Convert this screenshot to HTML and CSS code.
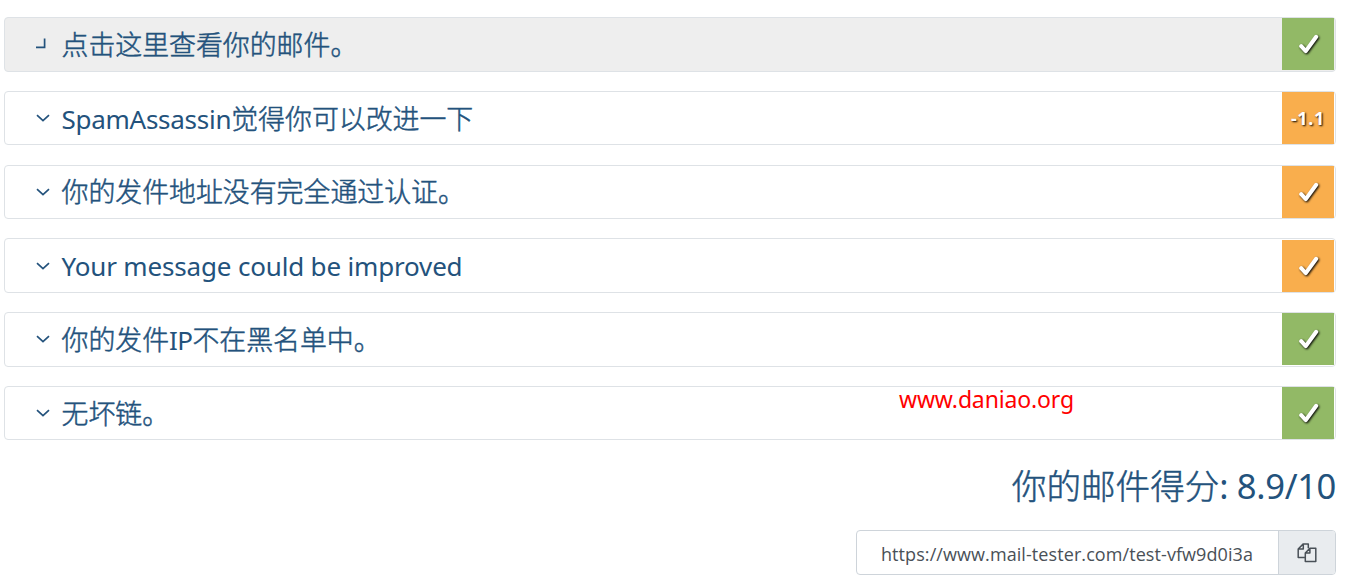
FILE: index.html
```
<!DOCTYPE html>
<html lang="zh">
<head>
<meta charset="utf-8">
<title>Mail Tester</title>
<link rel="stylesheet" href="styles.css">
</head>
<body>
<svg class="defs" width="0" height="0">
  <symbol id="check" viewBox="0 0 20 20"><path d="M2.2 12.2 L6.8 17.1 L17.2 2.8" fill="none" stroke="currentColor" stroke-width="4" stroke-linecap="round" stroke-linejoin="round"/></symbol>
  <symbol id="chevron" viewBox="0 0 14 8"><path d="M1 1.2 L7 6.6 L13 1.2" fill="none" stroke="currentColor" stroke-width="1.7"/></symbol>
</svg>
<main class="results">
  <section class="row open">
    <svg class="arrow turned" viewBox="0 0 14 14"><path d="M2 11.3 H10.6 V2.6" fill="none" stroke="currentColor" stroke-width="1.7"/></svg>
    <h2 class="title">点击这里查看你的邮件。</h2>
    <span class="status good"><svg class="check"><use href="#check"/></svg></span>
  </section>
  <section class="row">
    <svg class="arrow"><use href="#chevron"/></svg>
    <h2 class="title"><span class="brand">SpamAssassin</span>觉得你可以改进一下</h2>
    <span class="status warn">-1.1</span>
  </section>
  <section class="row">
    <svg class="arrow"><use href="#chevron"/></svg>
    <h2 class="title">你的发件地址没有完全通过认证。</h2>
    <span class="status warn"><svg class="check"><use href="#check"/></svg></span>
  </section>
  <section class="row">
    <svg class="arrow"><use href="#chevron"/></svg>
    <h2 class="title"><span class="english">Your message could be improved</span></h2>
    <span class="status warn"><svg class="check"><use href="#check"/></svg></span>
  </section>
  <section class="row">
    <svg class="arrow"><use href="#chevron"/></svg>
    <h2 class="title">你的发件<span class="ip">IP</span>不在黑名单中。</h2>
    <span class="status good"><svg class="check"><use href="#check"/></svg></span>
  </section>
  <section class="row">
    <svg class="arrow"><use href="#chevron"/></svg>
    <h2 class="title">无坏链。</h2>
    <span class="status good"><svg class="check"><use href="#check"/></svg></span>
    <span class="watermark">www.daniao.org</span>
  </section>
</main>
<footer class="summary">
  <h1 class="score">你的邮件得分<span class="value">: 8.9/10</span></h1>
  <div class="share">
    <div class="link"><span class="url">https://www.mail-tester.com/test-vfw9d0i3a</span></div>
    <button class="copy" aria-label="Copy"><svg class="copy-icon" viewBox="0 0 20 20" fill="none" stroke="currentColor" stroke-width="1.5" stroke-linejoin="round"><path d="M7.5 14.6 H1.2 V6 L6.3 .9 H11.3 V5.2 M6.3 .9 V6 H1.2 M8.3 10 L12.9 5.2 H18.8 V18.6 H8.3 Z M12.9 5.2 V10 H8.3"/></svg></button>
  </div>
</footer>
</body>
</html>
```
FILE: styles.css
```
* { box-sizing: border-box; }
body {
  margin: 0;
  padding: 17.05px 20px 0 4px;
  height: 584px;
  overflow: hidden;
  background: #fff;
  color: #23527c;
  font-family: "Noto Sans", "Noto Sans CJK SC", sans-serif;
}
.defs { position: absolute; }
.results { display: flex; flex-direction: column; gap: 19.4px; }
.row {
  position: relative;
  display: flex;
  align-items: center;
  height: 54.4px;
  padding: 0 1px 0 31px;
  border: 1px solid #dee2e6;
  border-radius: 4px;
  background: #fff;
}
.row.open { height: 54.6px; margin-bottom: -.2px; background: #eee; }
.arrow { width: 14px; height: 8px; margin-right: 11.5px; flex: none; }
.arrow.turned { height: 14px; margin-left: -2px; margin-right: 13.5px; transform: translateY(-1px); }
.title {
  flex: 1;
  margin: 0;
  padding-top: 1px;
  font-family: "Noto Sans", "Noto Sans CJK SC", sans-serif;
  font-size: 26.9px;
  line-height: 40px;
  font-weight: 300;
  -webkit-text-stroke: .5px currentColor;
  white-space: nowrap;
}
.brand, .english, .ip { font-size: 26px; font-weight: 400; -webkit-text-stroke: 0; }
.brand { letter-spacing: -.27px; }
.english { letter-spacing: -.17px; }
.ip { letter-spacing: -.6px; }
.status {
  width: 52px;
  height: 52px;
  flex: none;
  display: flex;
  align-items: center;
  justify-content: center;
  color: #fff;
  font: bold 18px "Noto Sans", sans-serif;
  letter-spacing: .7px;
  text-shadow: 1px 1px 2px #000;
}
.good { background: #92b966; }
.warn { background: #f9ae4d; }
.check { width: 20px; height: 20px; margin-left: 1px; filter: drop-shadow(1px 1px 1px #000); }
.watermark {
  position: absolute;
  left: 894px;
  top: -4px;
  color: #f00;
  font: 23px/32px "Noto Sans", sans-serif;
  letter-spacing: -.15px;
}
.summary { display: flex; flex-direction: column; align-items: flex-end; }
.score {
  margin: 20px 0 0;
  font-size: 34.6px;
  line-height: 52px;
  font-weight: 300;
  -webkit-text-stroke: .5px currentColor;
  white-space: nowrap;
}
.value { font-weight: 400; -webkit-text-stroke: 0; letter-spacing: -.35px; }
.share {
  display: flex;
  width: 480px;
  height: 45px;
  margin-top: 17.8px;
  border: 1px solid #ced4da;
  border-radius: 4px;
  overflow: hidden;
}
.link {
  flex: 1;
  padding-left: 24px;
  color: #495057;
  font: 18px/47px "Open Sans", sans-serif;
  letter-spacing: .08px;
  white-space: nowrap;
}
.copy {
  display: flex;
  align-items: center;
  justify-content: center;
  width: 57px;
  padding: 0;
  border: 0;
  border-left: 1px solid #ced4da;
  background: #e9ecef;
  color: #495057;
}
.copy-icon { width: 20px; height: 20px; }
```
